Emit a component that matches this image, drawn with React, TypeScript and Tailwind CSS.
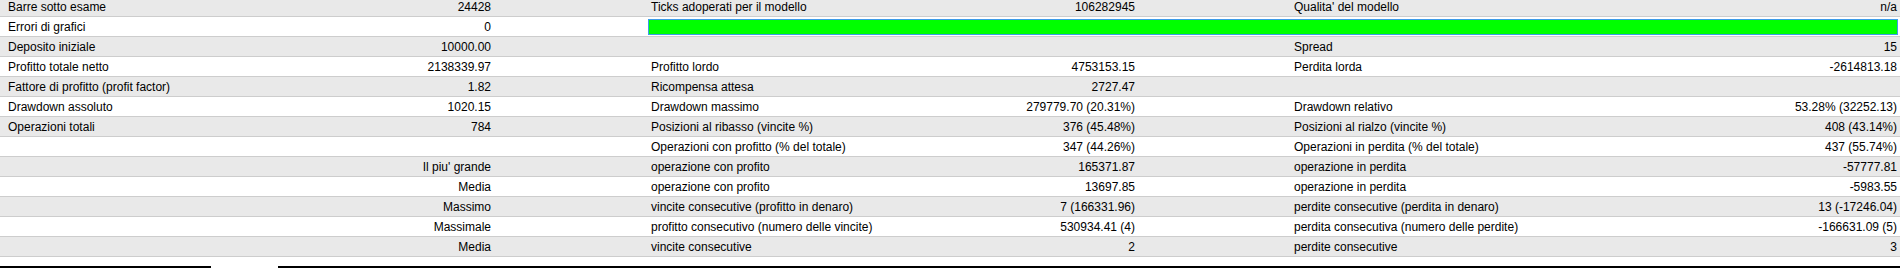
import React from "react";

type Cell = { l?: string; v?: string; r?: string } | null;
type Row = { a: Cell; b: Cell; c: Cell; bar?: boolean };

const rows: Row[] = [
  { a: { l: "Barre sotto esame", v: "24428" }, b: { l: "Ticks adoperati per il modello", v: "106282945" }, c: { l: "Qualita' del modello", v: "n/a" } },
  { a: { l: "Errori di grafici", v: "0" }, b: null, c: null, bar: true },
  { a: { l: "Deposito iniziale", v: "10000.00" }, b: null, c: { l: "Spread", v: "15" } },
  { a: { l: "Profitto totale netto", v: "2138339.97" }, b: { l: "Profitto lordo", v: "4753153.15" }, c: { l: "Perdita lorda", v: "-2614813.18" } },
  { a: { l: "Fattore di profitto (profit factor)", v: "1.82" }, b: { l: "Ricompensa attesa", v: "2727.47" }, c: null },
  { a: { l: "Drawdown assoluto", v: "1020.15" }, b: { l: "Drawdown massimo", v: "279779.70 (20.31%)" }, c: { l: "Drawdown relativo", v: "53.28% (32252.13)" } },
  { a: { l: "Operazioni totali", v: "784" }, b: { l: "Posizioni al ribasso (vincite %)", v: "376 (45.48%)" }, c: { l: "Posizioni al rialzo (vincite %)", v: "408 (43.14%)" } },
  { a: null, b: { l: "Operazioni con profitto (% del totale)", v: "347 (44.26%)" }, c: { l: "Operazioni in perdita (% del totale)", v: "437 (55.74%)" } },
  { a: { r: "Il piu' grande" }, b: { l: "operazione con profito", v: "165371.87" }, c: { l: "operazione in perdita", v: "-57777.81" } },
  { a: { r: "Media" }, b: { l: "operazione con profito", v: "13697.85" }, c: { l: "operazione in perdita", v: "-5983.55" } },
  { a: { r: "Massimo" }, b: { l: "vincite consecutive (profitto in denaro)", v: "7 (166331.96)" }, c: { l: "perdite consecutive (perdita in denaro)", v: "13 (-17246.04)" } },
  { a: { r: "Massimale" }, b: { l: "profitto consecutivo (numero delle vincite)", v: "530934.41 (4)" }, c: { l: "perdita consecutiva (numero delle perdite)", v: "-166631.09 (5)" } },
  { a: { r: "Media" }, b: { l: "vincite consecutive", v: "2" }, c: { l: "perdite consecutive", v: "3" } },
];

function Block({ cell, pl, pr }: { cell: Cell; pl: string; pr: string }) {
  if (!cell) return <div />;
  if (cell.r !== undefined) {
    return (
      <div className={`flex items-center justify-end ${pr} whitespace-nowrap`}>
        <span>{cell.r}</span>
      </div>
    );
  }
  return (
    <div className={`flex items-center justify-between ${pl} ${pr} whitespace-nowrap`}>
      <span>{cell.l}</span>
      <span>{cell.v}</span>
    </div>
  );
}

export default function App() {
  return (
    <div
      className="h-[268px] w-[1903px] overflow-hidden bg-white text-[12px] text-black"
      style={{ fontFamily: '"Liberation Sans", Arial, sans-serif' }}
    >
      <div className="-mt-[3px] w-[1900px]">
        {rows.map((row, i) => (
          <div
            key={i}
            className={`grid h-[20px] grid-cols-[497px_148px_496px_147px_1fr] border-b border-[#cdcdcd] ${
              i % 2 === 0 ? "bg-[#e9e9e9]" : "bg-white"
            }`}
          >
            <Block cell={row.a} pl="pl-[8px]" pr="pr-[6px]" />
            <div />
            {row.bar ? (
              <div className="col-span-3 flex pt-[2px] pb-[1px] pl-[3px] pr-[2px]">
                <div className="h-full w-full border border-[#3d9be9] bg-[#00ff00]" />
              </div>
            ) : (
              <>
                <Block cell={row.b} pl="pl-[6px]" pr="pr-[6px]" />
                <div />
                <Block cell={row.c} pl="pl-[6px]" pr="pr-[3px]" />
              </>
            )}
          </div>
        ))}
        <div className="flex pt-[9px]">
          <div className="h-[20px] w-[211px] border-2 border-black bg-white" />
          <div className="ml-[67px] h-[20px] flex-1 border-2 border-black bg-white" />
        </div>
      </div>
    </div>
  );
}
